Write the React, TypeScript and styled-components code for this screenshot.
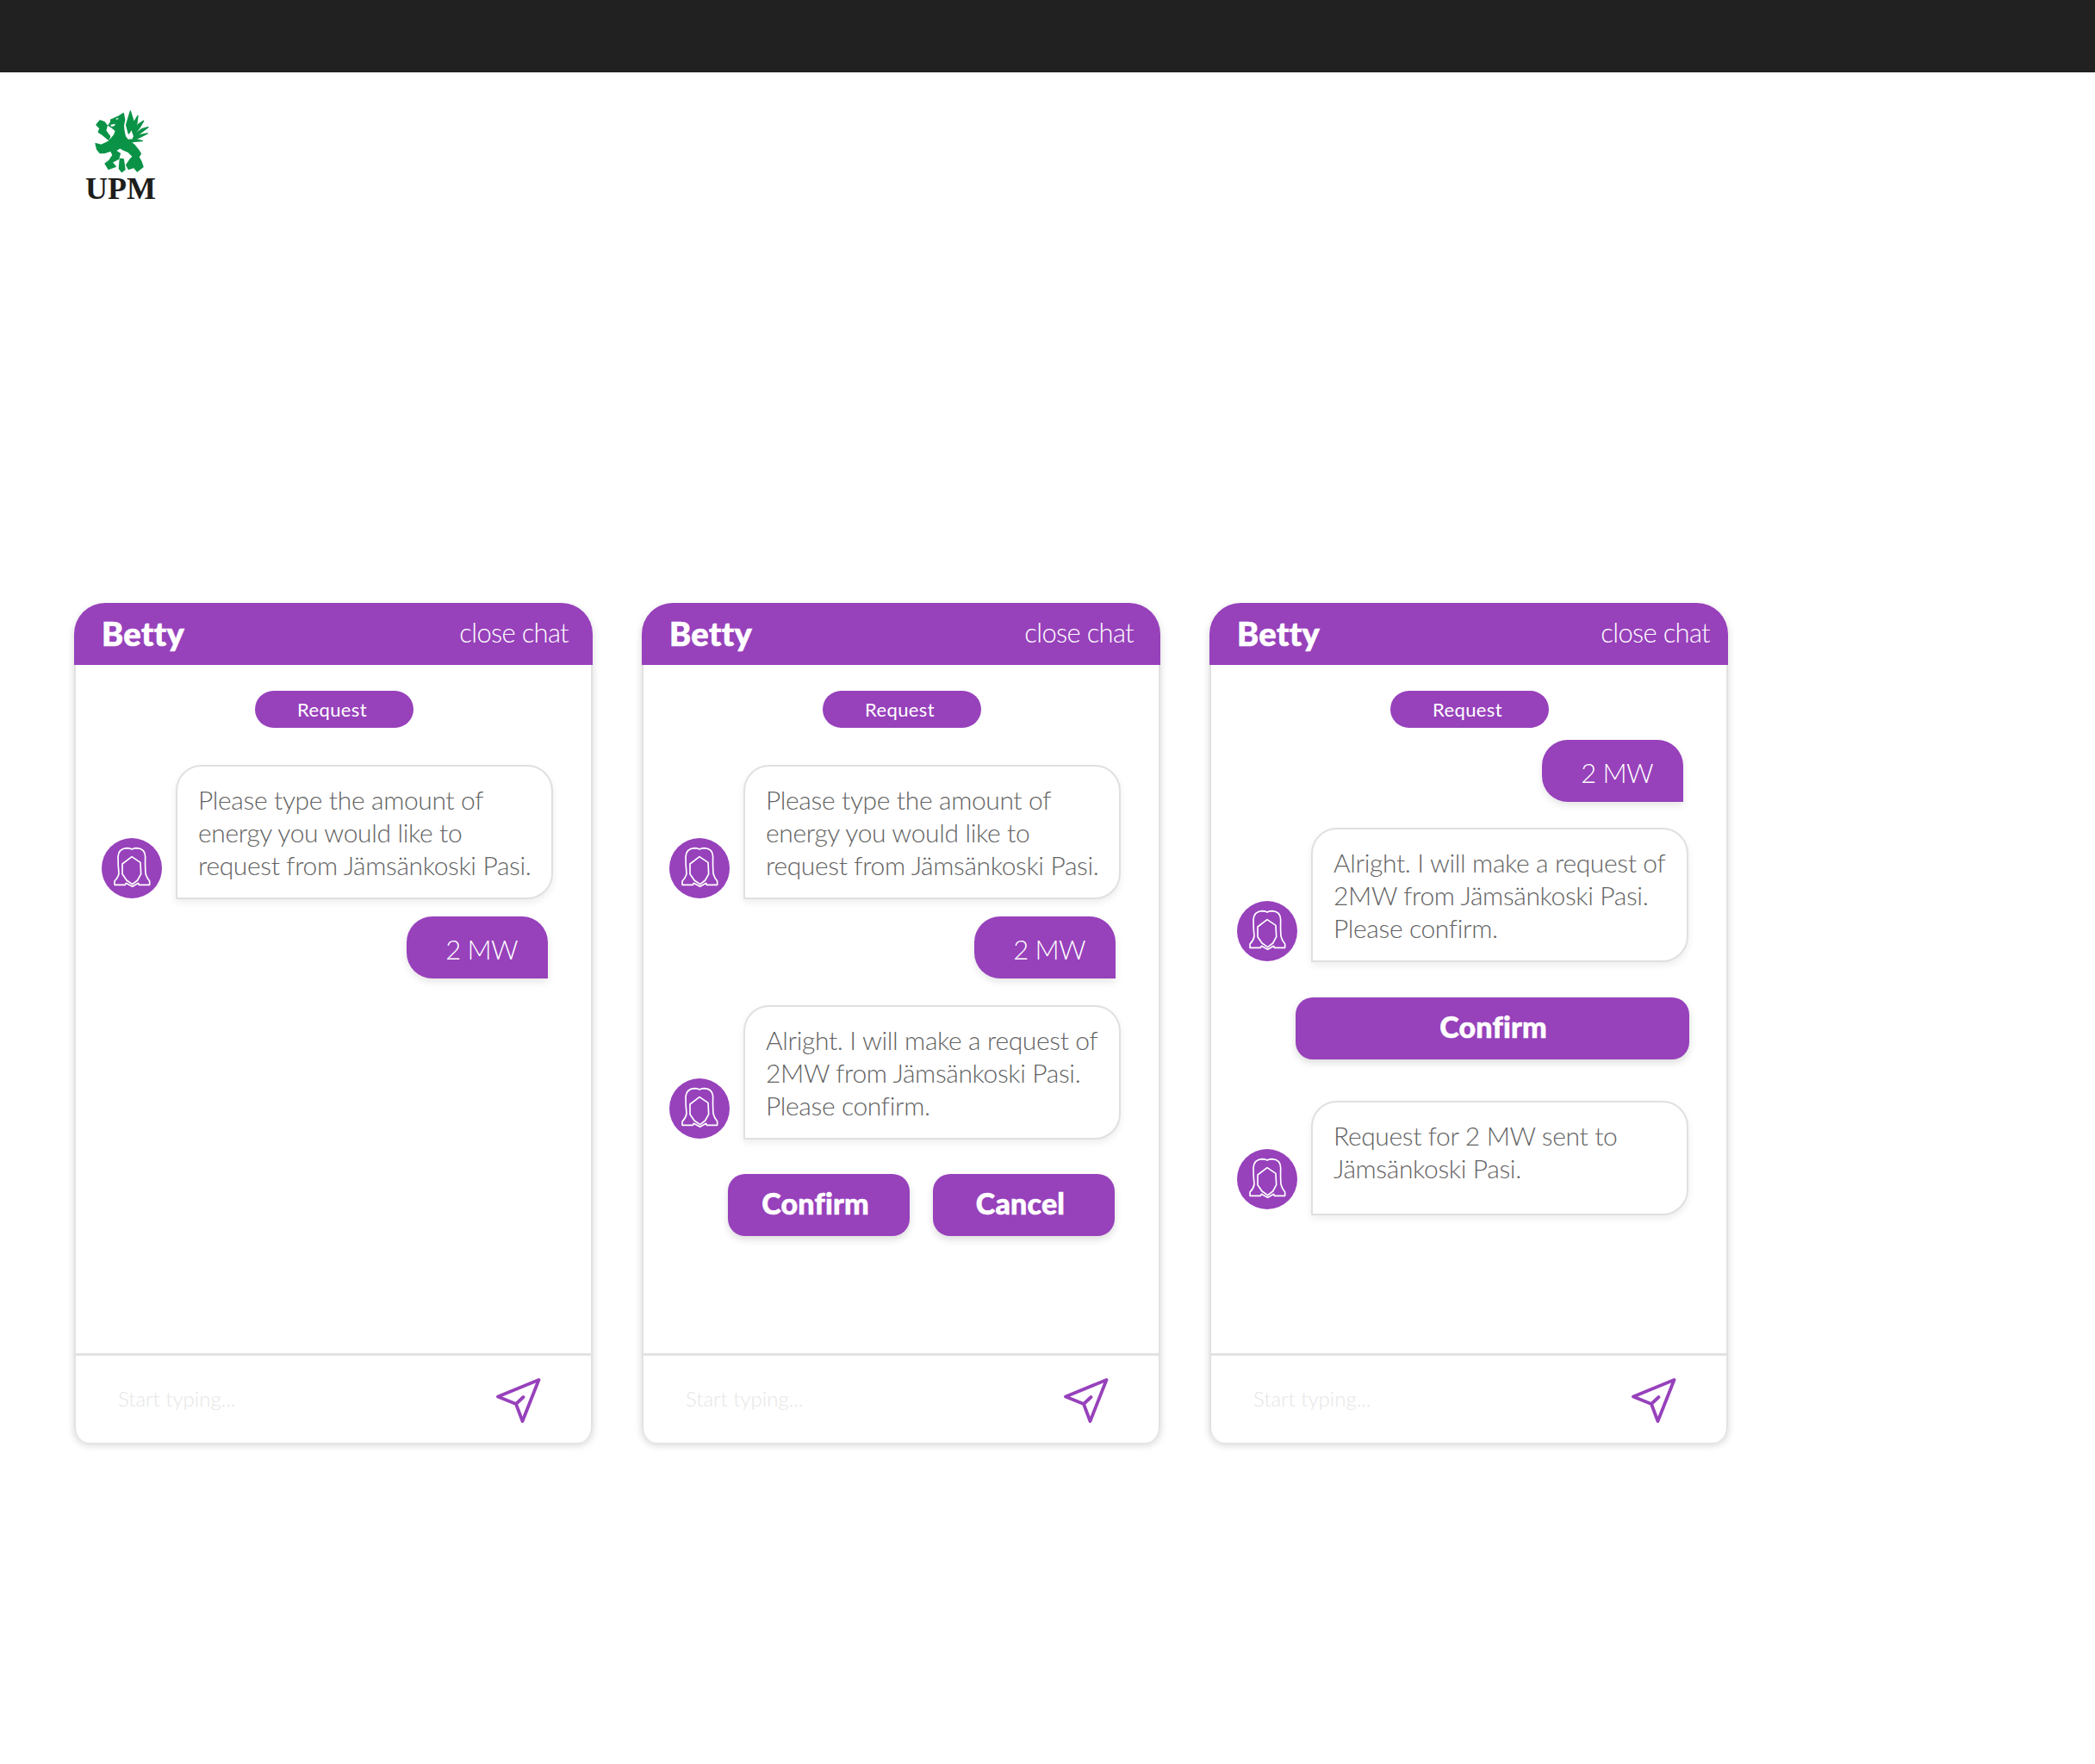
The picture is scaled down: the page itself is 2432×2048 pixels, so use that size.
import React from "react";
import styled, { createGlobalStyle } from "styled-components";

const PURPLE = "#9741bb";

const Global = createGlobalStyle`
  html, body { margin: 0; padding: 0; background: #fff; }
  body { font-family: "Lato", "Open Sans", sans-serif; }
  * { box-sizing: border-box; }
`;

const Page = styled.div`
  width: 2432px;
  height: 2048px;
  background: #fff;
  overflow: hidden;
`;
const TopBar = styled.div`
  height: 84px;
  background: #212121;
`;
const LogoArea = styled.div`
  height: 616px;
  padding: 41px 0 0 98px;
`;
const Logo = styled.div`
  width: 84px;
  display: flex;
  flex-direction: column;
  align-items: center;
  svg { margin-left: 4px; }
`;
const LogoWord = styled.div`
  font-family: "Liberation Serif", serif;
  font-weight: 700;
  font-size: 36px;
  line-height: 32px;
  color: #1d1d1b;
  margin-top: -2px;
`;
const Cards = styled.div`
  display: flex;
  gap: 57px;
  padding-left: 86px;
`;
const Card = styled.section`
  width: 602px;
  height: 975px;
  display: flex;
  flex-direction: column;
  border-radius: 36px 36px 18px 18px;
  box-shadow: 0 3px 8px rgba(0, 0, 0, 0.16);
  background: #fff;
`;
const Header = styled.header<{ $right: number }>`
  height: 72px;
  flex: none;
  background: ${PURPLE};
  border-radius: 36px 36px 0 0;
  color: #fff;
  display: flex;
  align-items: center;
  justify-content: space-between;
  padding: 0 ${(p) => p.$right}px 0 32px;
`;
const Name = styled.div`
  font-size: 38px;
  font-weight: 900;
  letter-spacing: 0.4px;
  -webkit-text-stroke: 0.7px #fff;
  margin-bottom: 2px;
`;
const Close = styled.div`
  font-size: 31px;
  font-weight: 300;
  letter-spacing: -0.7px;
  margin-bottom: 4px;
`;
const Chat = styled.div`
  flex: 1;
  padding-top: 30px;
  display: flex;
  flex-direction: column;
  border-left: 2px solid #e2e2e2;
  border-right: 2px solid #e2e2e2;
`;
const Pill = styled.div`
  align-self: center;
  width: 184px;
  height: 43px;
  margin-left: 1px;
  padding-right: 4px;
  border-radius: 22px;
  background: ${PURPLE};
  color: #fff;
  font-size: 22px;
  font-weight: 400;
  letter-spacing: 0.4px;
  display: flex;
  align-items: center;
  justify-content: center;
`;
const BotRow = styled.div<{ $top: number }>`
  display: flex;
  align-items: flex-end;
  gap: 16px;
  margin-top: ${(p) => p.$top}px;
  padding-left: 30px;
`;
const Avatar = styled.div<{ $lift: number }>`
  width: 70px;
  height: 70px;
  border-radius: 50%;
  background: ${PURPLE};
  flex: none;
  margin-bottom: ${(p) => p.$lift}px;
  svg { display: block; }
`;
const Bubble = styled.div`
  width: 438px;
  min-height: 133px;
  padding: 19px 16px 19px 24px;
  border: 2px solid #e0e0e0;
  border-radius: 30px 30px 30px 0;
  box-shadow: 0 4px 8px rgba(0, 0, 0, 0.07);
  color: #636363;
  font-size: 30px;
  font-weight: 300;
  letter-spacing: -0.36px;
  line-height: 38px;
  white-space: nowrap;
  background: #fff;
`;
const UserRow = styled.div<{ $top: number }>`
  display: flex;
  justify-content: flex-end;
  margin-top: ${(p) => p.$top}px;
  padding-right: 50px;
`;
const UserBubble = styled.div`
  width: 164px;
  height: 72px;
  padding: 4px 35px 0 0;
  border-radius: 30px 30px 0 30px;
  background: ${PURPLE};
  color: #fff;
  font-size: 31px;
  font-weight: 300;
  letter-spacing: -0.6px;
  display: flex;
  align-items: center;
  justify-content: flex-end;
  box-shadow: 0 4px 8px rgba(0, 0, 0, 0.1);
`;
const Actions = styled.div<{ $top: number; $full?: boolean }>`
  display: flex;
  gap: 27px;
  justify-content: flex-end;
  margin-top: ${(p) => p.$top}px;
  padding: 0 ${(p) => (p.$full ? 43 : 51)}px 0 ${(p) => (p.$full ? 98 : 0)}px;
`;
const ActionButton = styled.button<{ $full?: boolean }>`
  width: ${(p) => (p.$full ? "100%" : "211px")};
  height: 72px;
  border: 0;
  padding: 0 ${(p) => (p.$full ? 0 : 8)}px 5px ${(p) => (p.$full ? 2 : 0)}px;
  border-radius: 20px;
  background: ${PURPLE};
  color: #fff;
  font-family: inherit;
  font-size: 34px;
  font-weight: 900;
  letter-spacing: 0.2px;
  -webkit-text-stroke: 0.6px #fff;
  box-shadow: 0 4px 8px rgba(0, 0, 0, 0.14);
`;
const Footer = styled.footer`
  height: 104px;
  flex: none;
  display: flex;
  align-items: center;
  justify-content: space-between;
  padding: 0 58px 0 49px;
  border: 2px solid #e2e2e2;
  border-top-width: 3px;
  border-bottom: 0;
  border-radius: 0 0 18px 18px;
  svg { margin-top: 2px; }
`;
const Placeholder = styled.div`
  font-size: 24px;
  font-weight: 300;
  color: #e6e6e6;
  margin-bottom: 2px;
`;

const Griffin = () => (
  <svg width="72" height="80" viewBox="0 0 216 240" aria-hidden="true">
    <g fill="#0a9347" stroke="#0a9347" strokeWidth="4" strokeLinejoin="round">
      <path d="M112 20 L116 42 L112 62 L114 82 L118 100 L128 114 L150 130 L166 150 L172 160 L165 172 L174 188 L180 206 L160 222 L148 208 L130 214 L122 200 L135 180 L145 170 L130 155 L108 145 L100 140 L85 150 L100 160 L95 178 L72 190 L85 205 L60 214 L48 195 L62 185 L75 165 L68 150 L45 158 L30 158 L20 145 L15 125 L35 130 L60 118 L80 95 L85 80 L70 68 L60 62 L68 50 L68 42 L95 30 Z" />
      <path d="M18 60 L30 45 L45 50 L55 62 L50 80 L65 100 L60 112 L40 95 L25 85 L30 72 Z" />
      <path d="M100 178 L112 180 L117 215 L106 224 L97 212 Z" />
      <path d="M136 12 L148 50 L146 68 L130 90 L122 60 Z" />
      <path d="M162 28 L158 60 L146 88 L138 70 L150 48 Z" />
      <path d="M182 46 L168 70 L148 96 L144 86 L164 58 Z" />
      <path d="M198 68 L172 88 L150 104 L148 96 L176 74 Z" />
      <path d="M196 90 L168 104 L146 112 L146 104 L172 94 Z" />
      <path d="M178 116 L150 118 L132 122 L128 112 L156 110 Z" />
    </g>
    <path d="M84 38 L96 36 L90 42 Z M66 60 L84 56 L80 64 L70 66 Z" fill="#fff" />
  </svg>
);

const Agent = ({ lift = 1 }: { lift?: number }) => (
  <Avatar $lift={lift}>
    <svg width="70" height="70" viewBox="55 65 210 210" aria-hidden="true">
      <g fill="none" stroke="#fff" strokeWidth="5" strokeLinejoin="round">
        <path d="M100 228 L100 215 Q112 204 115 188 Q112 160 112 130 Q114 102 142 100 Q152 100 160 104 Q168 100 178 100 Q206 102 207 130 Q206 165 208 188 Q212 204 222 215 L222 228 L185 228 L183 222 L162 234 L140 222 L137 228 Z" />
        <path d="M160 130 L190 150 L192 190 L180 212 L162 226 L142 212 L127 190 L127 155 Z" />
      </g>
    </svg>
  </Avatar>
);

const Send = () => (
  <svg width="52" height="52" viewBox="-2 -2 52 52" aria-hidden="true">
    <path
      d="M47.5 0 L0 19.5 L21 28 L28.5 48 Z M21 28 L29.5 20"
      fill="none"
      stroke={PURPLE}
      strokeWidth="3.8"
      strokeLinejoin="round"
      strokeLinecap="round"
    />
  </svg>
);

const ChatCard = ({ right, children }: { right: number; children: React.ReactNode }) => (
  <Card>
    <Header $right={right}>
      <Name>Betty</Name>
      <Close>close chat</Close>
    </Header>
    <Chat>
      <Pill>Request</Pill>
      {children}
    </Chat>
    <Footer>
      <Placeholder>Start typing...</Placeholder>
      <Send />
    </Footer>
  </Card>
);

const Bot = ({ top, lines, lift }: { top: number; lines: string[]; lift?: number }) => (
  <BotRow $top={top}>
    <Agent lift={lift} />
    <Bubble>
      {lines.map((l, i) => (
        <div key={i}>{l}</div>
      ))}
    </Bubble>
  </BotRow>
);

const Ask = ["Please type the amount of", "energy you would like to", "request from Jämsänkoski Pasi."];
const Sure = ["Alright. I will make a request of", "2MW from Jämsänkoski Pasi.", "Please confirm."];

export default function App() {
  return (
    <Page>
      <Global />
      <TopBar />
      <LogoArea>
        <Logo>
          <Griffin />
          <LogoWord>UPM</LogoWord>
        </Logo>
      </LogoArea>
      <Cards>
        <ChatCard right={28}>
          <Bot top={43} lines={Ask} />
          <UserRow $top={20}>
            <UserBubble>2 MW</UserBubble>
          </UserRow>
        </ChatCard>
        <ChatCard right={31}>
          <Bot top={43} lines={Ask} />
          <UserRow $top={20}>
            <UserBubble>2 MW</UserBubble>
          </UserRow>
          <Bot top={31} lines={Sure} />
          <Actions $top={40}>
            <ActionButton>Confirm</ActionButton>
            <ActionButton>Cancel</ActionButton>
          </Actions>
        </ChatCard>
        <ChatCard right={21}>
          <UserRow $top={14}>
            <UserBubble>2 MW</UserBubble>
          </UserRow>
          <Bot top={30} lines={Sure} />
          <Actions $top={41} $full>
            <ActionButton $full>Confirm</ActionButton>
          </Actions>
          <Bot top={48} lift={7} lines={["Request for 2 MW sent to", "Jämsänkoski Pasi."]} />
        </ChatCard>
      </Cards>
    </Page>
  );
}
